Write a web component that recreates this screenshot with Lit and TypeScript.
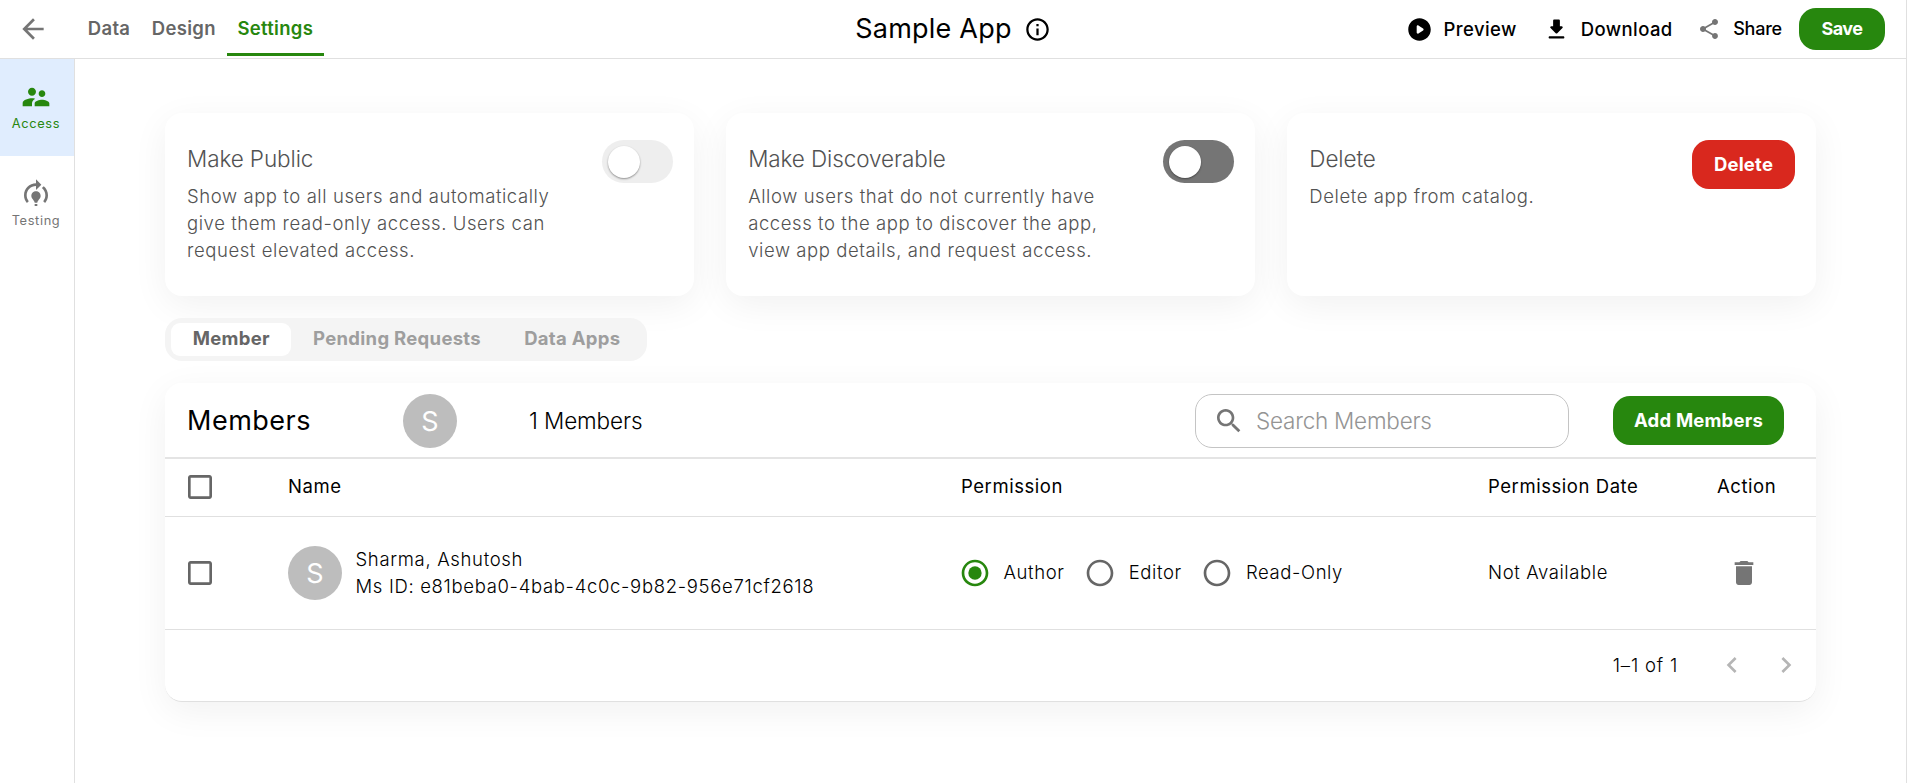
import { LitElement, html, css, svg } from "lit";
import { customElement } from "lit/decorators.js";

const icon = (size: number, body: unknown, cls = "") =>
  html`<svg class="icon ${cls}" width=${size} height=${size} viewBox="0 0 24 24" fill="currentColor">${body}</svg>`;

const ICONS = {
  back: svg`<path d="M20 11H7.83l5.59-5.59L12 4l-8 8 8 8 1.41-1.41L7.83 13H20v-2z"/>`,
  info: svg`<path d="M11 7h2v2h-2zm0 4h2v6h-2zm1-9C6.48 2 2 6.48 2 12s4.48 10 10 10 10-4.48 10-10S17.52 2 12 2zm0 18c-4.41 0-8-3.59-8-8s3.59-8 8-8 8 3.59 8 8-3.59 8-8 8z"/>`,
  play: svg`<path d="M12 2C6.48 2 2 6.48 2 12s4.48 10 10 10 10-4.48 10-10S17.52 2 12 2zm-2.500 12.670V9.330c0-.79.88-1.270 1.540-.84l4.150 2.670c.61.39.61 1.290 0 1.680l-4.150 2.670c-.66.43-1.540-.05-1.540-.84z"/>`,
  download: svg`<path d="M16.59 9H15V4c0-.55-.45-1-1-1h-4c-.55 0-1 .45-1 1v5H7.41c-.89 0-1.34 1.08-.71 1.71l4.59 4.59c.39.39 1.02.39 1.41 0l4.59-4.59c.63-.63.19-1.71-.7-1.71zM5 19c0 .55.45 1 1 1h12c.55 0 1-.45 1-1s-.45-1-1-1H6c-.55 0-1 .45-1 1z"/>`,
  share: svg`<path d="M18 16.08c-.76 0-1.44.3-1.96.77L8.91 12.7c.05-.23.09-.46.09-.7s-.04-.47-.09-.7l7.05-4.11c.54.5 1.25.81 2.04.81 1.66 0 3-1.34 3-3s-1.34-3-3-3-3 1.34-3 3c0 .24.04.47.09.7L8.04 9.81C7.5 9.31 6.79 9 6 9c-1.66 0-3 1.34-3 3s1.34 3 3 3c.79 0 1.5-.31 2.04-.81l7.12 4.16c-.05.21-.08.43-.08.65 0 1.61 1.31 2.92 2.92 2.92s2.92-1.31 2.92-2.92-1.31-2.92-2.92-2.92z"/>`,
  people: svg`<path d="M16.5 12c1.38 0 2.49-1.12 2.49-2.5S17.88 7 16.5 7C15.12 7 14 8.12 14 9.5s1.12 2.5 2.5 2.5zM9 11c1.66 0 2.99-1.34 2.99-3S10.66 5 9 5C7.34 5 6 6.34 6 8s1.34 3 3 3zm7.5 3c-1.83 0-5.5.92-5.5 2.75V19h11v-2.25c0-1.83-3.67-2.75-5.5-2.75zM9 13c-2.33 0-7 1.17-7 3.5V19h7v-2.25c0-.85.33-2.34 2.37-3.47C10.5 13.1 9.66 13 9 13z"/>`,
  testing: svg`<path d="M15.500 13.500c0 2-2.500 3.500-2.500 5h-2c0-1.500-2.500-3-2.500-5 0-1.930 1.570-3.500 3.500-3.500s3.500 1.570 3.500 3.500zM13 19.500h-2V21h2v-1.500zM19 13c0 1.680-.59 3.210-1.580 4.420l1.420 1.420C20.180 17.250 21 15.220 21 13c0-2.740-1.230-5.190-3.160-6.840l-1.420 1.420C17.990 8.860 19 10.820 19 13zM16 5l-4-4v3c-4.970 0-9 4.030-9 9 0 2.220.82 4.250 2.160 5.840l1.420-1.420C5.590 16.210 5 14.680 5 13c0-3.860 3.140-7 7-7v3l4-4z"/>`,
  search: svg`<path d="M15.500 14h-.79l-.28-.27C15.410 12.590 16 11.110 16 9.500 16 5.910 13.090 3 9.500 3S3 5.910 3 9.500 5.910 16 9.500 16c1.610 0 3.090-.59 4.230-1.570l.27.28v.79l5 4.990L20.490 19l-4.990-5zm-6 0C7.010 14 5 11.990 5 9.500S7.010 5 9.500 5 14 7.010 14 9.500 11.990 14 9.500 14z"/>`,
  box: svg`<path d="M19 5v14H5V5h14m0-2H5c-1.100 0-2 .9-2 2v14c0 1.100.9 2 2 2h14c1.100 0 2-.9 2-2V5c0-1.100-.9-2-2-2z"/>`,
  radio: svg`<path d="M12 2C6.480 2 2 6.480 2 12s4.480 10 10 10 10-4.480 10-10S17.520 2 12 2zm0 18c-4.420 0-8-3.580-8-8s3.580-8 8-8 8 3.580 8 8-3.580 8-8 8z"/>`,
  trash: svg`<path d="M6 19c0 1.100.9 2 2 2h8c1.100 0 2-.9 2-2V7H6v12zM19 4h-3.500l-1-1h-5l-1 1H5v2h14V4z"/>`,
  left: svg`<path d="M15.410 16.590L10.830 12l4.580-4.590L14 6l-6 6 6 6 1.410-1.410z"/>`,
  right: svg`<path d="M8.590 16.590L13.170 12 8.590 7.410 10 6l6 6-6 6-1.410-1.410z"/>`,
};

@customElement("app-root")
export class AppRoot extends LitElement {
  static styles = css`
    :host { display: block; width: 100%; height: 783px; overflow: hidden; background: #fff;
      font-family: Inter, sans-serif; color: #000; font-size: 18.5px; }
    * { box-sizing: border-box; }
    .icon { display: block; flex: none; }
    .page { height: 783px; width: 1907px; border-right: 1px solid #e0e0e0; display: flex; flex-direction: column; }
    .header { height: 59px; flex: none; border-bottom: 1px solid #e0e0e0; display: grid; grid-template-columns: 1fr auto 1fr; }
    .nav { display: flex; align-items: stretch; padding-left: 17px; color: #757575; }
    .nav .icon { margin-top: 13px; }
    .tabs { display: flex; margin-left: 28px; height: 56px; font-weight: 600; color: #666; letter-spacing: 0.3px; }
    .tab { padding: 0 10.8px; line-height: 57px; border-bottom: 3px solid transparent; height: 56px; white-space: nowrap; }
    .tab.on { color: #27870e; border-color: #27870e; }
    .title { display: flex; align-items: center; gap: 12px; font-size: 27px; letter-spacing: 0.22px; line-height: 57px; height: 58px; }
    .title span { padding-bottom: 2px; }
    .actions { display: flex; align-items: center; justify-content: flex-end; padding-right: 21px; font-weight: 500; height: 58px; letter-spacing: 0.4px; }
    .actions span { white-space: nowrap; padding-bottom: 1px; margin: 0 26px 0 11px; }
    .actions .download { margin-right: 24.5px; }
    .actions .share { font-size: 18px; letter-spacing: -0.2px; margin: 0 0 0 12px; }
    .grey { color: #757575; }
    .btn { background: #27870e; color: #fff; font-weight: 700; border-radius: 17px; display: flex; align-items: center; justify-content: center; height: 49px; white-space: nowrap; flex: none; letter-spacing: 0.2px; }
    .save { width: 86px; height: 42px; margin-left: 17px; font-size: 18px; letter-spacing: -0.5px; padding-bottom: 2px; }
    .body { display: flex; flex: 1; min-height: 0; }
    .side { width: 75px; flex: none; border-right: 1px solid #e0e0e0; font-size: 12.8px; letter-spacing: 0.65px; color: #757575; }
    .item { height: 97px; display: flex; flex-direction: column; align-items: center; padding: 22px 2px 0 0; line-height: 16px; gap: 2.5px; }
    .item.on { background: #e0edfe; color: #27870e; }
    .main { flex: 1; padding: 54px 90px 0; display: flex; flex-direction: column; }
    .cards { display: grid; grid-template-columns: repeat(3, 528.7px); justify-content: space-between; }
    .card { height: 183px; border-radius: 17px; box-shadow: 0 9px 36px rgba(0,0,0,.06); padding: 27px 21px 0 22px; display: flex; justify-content: space-between; align-items: flex-start; color: #525252; background: #fff; }
    .card h3 { margin: 5px 0 11px; font-weight: 300; font-size: 22.5px; line-height: 27px; letter-spacing: -0.1px; }
    .card p { margin: 0; font-weight: 300; line-height: 27px; letter-spacing: 0.58px; white-space: pre-line; }
    .switch { width: 70.5px; height: 43px; border-radius: 22px; background: #eee; padding: 6px; flex: none; }
    .switch.dark { background: #757575; }
    .knob { width: 32px; height: 32px; border-radius: 50%; background: #fff; box-shadow: 0 1px 2px rgba(0,0,0,.4); }
    .danger { background: #d9281e; width: 103px; padding-bottom: 2px; }
    .seg { margin-top: 22px; align-self: flex-start; display: flex; height: 43px; border-radius: 17px; background: #f4f4f4; padding: 5px 5.5px; font-weight: 700; color: #9e9e9e; letter-spacing: 0.3px; }
    .seg div { padding: 0 21px 0 22.2px; line-height: 31px; height: 33px; white-space: nowrap; border-radius: 9px; }
    .seg .on { background: #fff; color: #666; }
    .wrap { border-radius: 17px; margin-top: 22px; box-shadow: 0 9px 36px rgba(0,0,0,.06); }
    .panel { height: 319px; border-radius: 17px; overflow: hidden; background: #fff; border-bottom: 1px solid #e0e0e0; }
    .top { height: 76px; border-bottom: 2px solid #e4e4e4; display: flex; align-items: center; padding: 2px 32px 0 22px; }
    .top h2 { margin: 0 0 1px; width: 216px; font-size: 27px; font-weight: 400; letter-spacing: 0.5px; }
    .avatar { width: 54px; height: 54px; border-radius: 50%; background: #bdbdbd; color: #fff; font-size: 27px; font-weight: 400; display: flex; align-items: center; justify-content: center; flex: none; letter-spacing: 0; }
    .count { margin-left: 72px; font-size: 22.5px; font-weight: 300; letter-spacing: -0.1px; flex: 1; padding-bottom: 1px; }
    .search { width: 374px; height: 54px; border: 1px solid #c4c4c4; border-radius: 17px; display: flex; align-items: center; padding-left: 17px; gap: 11px; color: #757575; font-size: 22.5px; font-weight: 300; letter-spacing: -0.23px; margin-right: 44px; }
    .search span { color: #949494; padding-bottom: 1px; }
    .add { width: 171px; margin-bottom: 1px; padding-bottom: 1px; }
    .row { display: grid; grid-template-columns: 123px 673px 527px 229px 1fr; border-bottom: 1px solid #e0e0e0; align-items: center; }
    .head { height: 58px; font-weight: 430; letter-spacing: 0.55px; padding-bottom: 2px; }
    .head .label { padding-bottom: 1px; }
    .line { height: 113px; letter-spacing: 0.6px; font-weight: 300; }
    .line .label { padding-bottom: 2px; }
    .check { padding-left: 19px; color: #666; }
    .person { display: flex; align-items: center; gap: 13.5px; line-height: 27px; white-space: nowrap; letter-spacing: 0.67px; }
    .radios { display: flex; align-items: center; margin-left: -2.5px; letter-spacing: 0.6px; color: #666; }
    .radios span { margin: 0 19.2px 2px 13px; color: #000; }
    .radios .green { color: #27870e; }
    .bin { padding-left: 10.5px; }
    .foot { height: 71px; display: flex; align-items: center; justify-content: flex-end; padding: 0 14px 1px 0; gap: 22px; }
    .foot span { margin-right: 16px; letter-spacing: 0.8px; font-weight: 300; }
    .foot .icon { color: #b5b5b5; }
  `;

  render() {
    return html`<div class="page">
      <header class="header">
        <div class="nav">${icon(32, ICONS.back)}
          <div class="tabs"><div class="tab">Data</div><div class="tab">Design</div><div class="tab on">Settings</div></div>
        </div>
        <div class="title"><span>Sample App</span>${icon(27, ICONS.info)}</div>
        <div class="actions">
          ${icon(27, ICONS.play)}<span>Preview</span>
          ${icon(27, ICONS.download)}<span class="download">Download</span>
          ${icon(24, ICONS.share, "grey")}<span class="share">Share</span>
          <div class="btn save">Save</div>
        </div>
      </header>
      <div class="body">
        <nav class="side">
          <div class="item on">${icon(32, ICONS.people)}<div>Access</div></div>
          <div class="item">${icon(32, ICONS.testing)}<div>Testing</div></div>
        </nav>
        <main class="main">
          <section class="cards">
            <div class="card"><div><h3>Make Public</h3><p>${"Show app to all users and automatically\ngive them read-only access. Users can\nrequest elevated access."}</p></div><div class="switch"><div class="knob"></div></div></div>
            <div class="card"><div><h3>Make Discoverable</h3><p>${"Allow users that do not currently have\naccess to the app to discover the app,\nview app details, and request access."}</p></div><div class="switch dark"><div class="knob"></div></div></div>
            <div class="card"><div><h3>Delete</h3><p>Delete app from catalog.</p></div><div class="btn danger">Delete</div></div>
          </section>
          <div class="seg"><div class="on">Member</div><div>Pending Requests</div><div>Data Apps</div></div>
          <div class="wrap"><section class="panel">
            <div class="top"><h2>Members</h2><div class="avatar">S</div><div class="count">1 Members</div>
              <div class="search">${icon(32, ICONS.search)}<span>Search Members</span></div><div class="btn add">Add Members</div></div>
            <div class="row head"><div class="check">${icon(32, ICONS.box)}</div><div class="label">Name</div><div class="label">Permission</div><div class="label">Permission Date</div><div class="label">Action</div></div>
            <div class="row line"><div class="check">${icon(32, ICONS.box)}</div>
              <div class="person"><div class="avatar">S</div><div>Sharma, Ashutosh<br>Ms ID: e81beba0-4bab-4c0c-9b82-956e71cf2618</div></div>
              <div class="radios">${icon(32, svg`${ICONS.radio}<circle cx="12" cy="12" r="5"/>`, "green")}<span>Author</span>${icon(32, ICONS.radio)}<span>Editor</span>${icon(32, ICONS.radio)}<span>Read-Only</span></div>
              <div class="label">Not Available</div><div class="grey bin">${icon(32, ICONS.trash)}</div></div>
            <div class="foot"><span>1–1 of 1</span>${icon(32, ICONS.left)}${icon(32, ICONS.right)}</div>
          </section></div>
        </main>
      </div>
    </div>`;
  }
}
